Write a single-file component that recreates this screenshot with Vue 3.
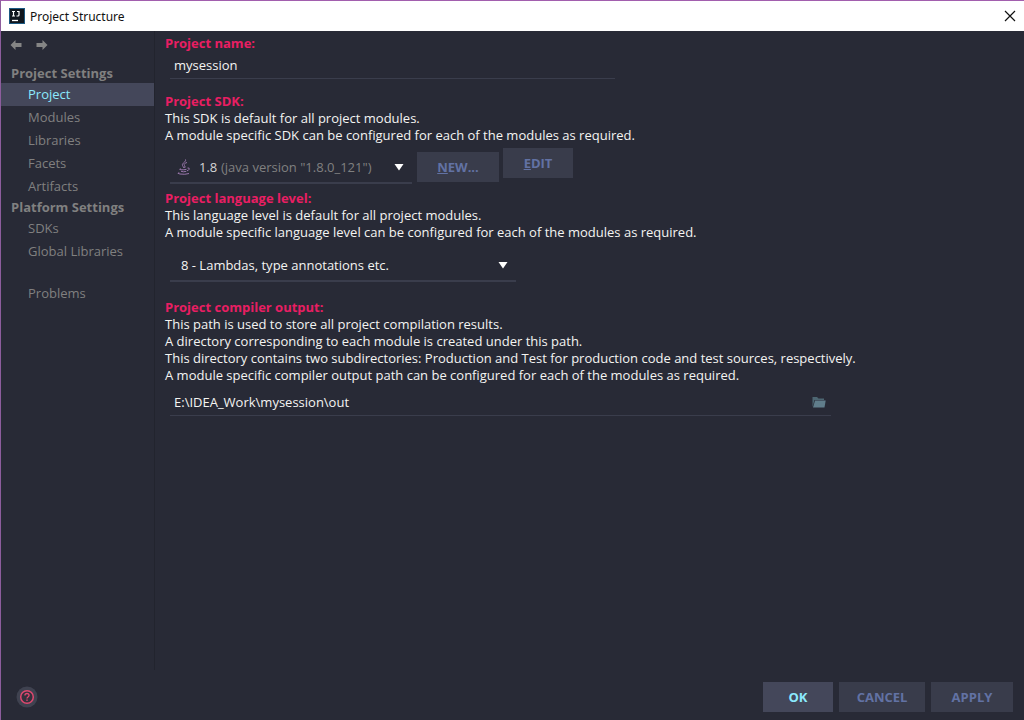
<script setup>
import { ref } from 'vue'

const projectItems = ['Project', 'Modules', 'Libraries', 'Facets', 'Artifacts']
const platformItems = ['SDKs', 'Global Libraries']
const active = ref('Project')
const name = ref('mysession')
const output = ref('E:\\IDEA_Work\\mysession\\out')
</script>

<template>
  <div class="window">
    <header class="titlebar">
      <svg class="logo" viewBox="0 0 16 16" aria-hidden="true">
        <rect width="16" height="16" fill="#1c5a83" />
        <rect x="1" y="1" width="14" height="14" fill="#10161e" />
        <path d="M3 3.500h3M4.500 3.500v4.500M3 8h3M8 3.500h2.500M10 3v4q0 1-1 1H7.500" fill="none" stroke="#fff" stroke-width="1.200" />
        <path d="M3 12.500h6" stroke="#fff" stroke-width="1.300" />
      </svg>
      <h1>Project Structure</h1>
      <button class="close" aria-label="Close">
        <svg viewBox="0 0 12 12"><path d="M1 1l10 10M11 1L1 11" stroke="#111" stroke-width="1.200" /></svg>
      </button>
    </header>

    <div class="body">
      <nav class="sidebar">
        <div class="history">
          <button aria-label="Back">
            <svg viewBox="0 0 12 10"><path d="M0.500 5L5.500 0v3H11.500v4H5.500v3z" /></svg>
          </button>
          <button aria-label="Forward">
            <svg viewBox="0 0 12 10"><path d="M11.500 5L6.500 0v3H0.500v4H6.500v3z" /></svg>
          </button>
        </div>
        <h2>Project Settings</h2>
        <a v-for="i in projectItems" :key="i" href="#" :class="{ active: active === i }" @click.prevent="active = i">{{ i }}</a>
        <h2>Platform Settings</h2>
        <a v-for="i in platformItems" :key="i" href="#" :class="{ active: active === i }" @click.prevent="active = i">{{ i }}</a>
        <a class="problems" href="#" :class="{ active: active === 'Problems' }" @click.prevent="active = 'Problems'">Problems</a>
      </nav>

      <main>
        <section>
          <label class="heading" for="name">Project name:</label>
          <input id="name" v-model="name" class="name" type="text" />
        </section>

        <section class="sdk">
          <label class="heading" for="sdk">Project SDK:</label>
          <p>This SDK is default for all project modules.</p>
          <p>A module specific SDK can be configured for each of the modules as required.</p>
          <div class="sdk-row">
            <div class="combo sdk-combo">
              <span class="prefix">
                <svg class="java" viewBox="0 0 14 16" aria-hidden="true">
                  <path d="M8.500 0.500C9.500 3 4.500 4 5.500 6.500Q6 7.500 7 9M10 3.500C7 4.500 6.500 5.500 7.800 7Q8.500 8 7.500 9M3.500 9.500Q1.500 10.500 4 10.800Q7 11 9.500 10.300M10.500 9Q13 8.500 12 10.500Q11.500 11.500 10 11.800M4 12.300Q6.500 13.300 9.300 12.300M2 13.300Q-0.500 14.500 3 15Q8 15.800 12 14.500" />
                </svg>
                <span>1.8</span>
              </span>
              <select id="sdk"><option>(java version "1.8.0_121")</option></select>
              <svg class="arrow" viewBox="0 0 10 8" aria-hidden="true"><path d="M0.500 1h9L5 7.500z" /></svg>
            </div>
            <button class="btn new"><u>N</u>EW...</button>
            <button class="btn edit"><u>E</u>DIT</button>
          </div>
        </section>

        <section class="level">
          <label class="heading" for="level">Project language level:</label>
          <p>This language level is default for all project modules.</p>
          <p>A module specific language level can be configured for each of the modules as required.</p>
          <div class="combo level-combo">
            <select id="level"><option>8 - Lambdas, type annotations etc.</option></select>
            <svg class="arrow" viewBox="0 0 10 8" aria-hidden="true"><path d="M0.500 1h9L5 7.500z" /></svg>
          </div>
        </section>

        <section class="output">
          <label class="heading" for="output">Project compiler output:</label>
          <p>This path is used to store all project compilation results.</p>
          <p>A directory corresponding to each module is created under this path.</p>
          <p>This directory contains two subdirectories: Production and Test for production code and test sources, respectively.</p>
          <p>A module specific compiler output path can be configured for each of the modules as required.</p>
          <div class="path">
            <input id="output" v-model="output" type="text" />
            <button aria-label="Browse">
              <svg viewBox="0 0 14 12">
                <path d="M0.500 11V1H5l1.500 1.500H12V4H2.500z" fill="#4d6672" />
                <path d="M3 4.500h10.700L12.500 11.500H1z" fill="#607d8b" />
              </svg>
            </button>
          </div>
        </section>
      </main>
    </div>

    <footer>
      <button class="help" aria-label="Help">
        <svg viewBox="0 0 22 22">
          <circle cx="11" cy="11" r="10.500" fill="#3f4250" />
          <circle cx="11" cy="11" r="6.300" fill="#34313d" stroke="#e0486f" stroke-width="1.500" />
          <path d="M8.900 9.500Q9 7.500 11 7.500T13.100 9.400Q13 10.300 12 11T11 12.600" fill="none" stroke="#e0486f" stroke-width="1.300" />
          <rect x="10.300" y="13.500" width="1.400" height="1.400" fill="#e0486f" />
        </svg>
      </button>
      <button class="btn ok">OK</button>
      <button class="btn cancel">CANCEL</button>
      <button class="btn apply">APPLY</button>
    </footer>
  </div>
</template>

<style>
body {
  background: #282a36;
}
</style>

<style scoped>
* {
  box-sizing: border-box;
}
.window {
  display: flex;
  flex-direction: column;
  min-height: 100vh;
  border-top: 1px solid #a25fae;
  border-left: 1px solid #8d5d9d;
  background: #282a36;
  color: #f4f4f2;
  font: 13px/17px "Open Sans", "Noto Sans", sans-serif;
}
h1, h2, p {
  margin: 0;
}
button, input, select {
  font: inherit;
  color: inherit;
  background: none;
  border: 0;
  padding: 0;
  margin: 0;
  border-radius: 0;
}
svg {
  display: block;
}
.titlebar {
  display: flex;
  align-items: center;
  height: 30px;
  padding: 0 8px;
  background: #fff;
  color: #111;
}
.logo {
  width: 16px;
  height: 16px;
}
h1 {
  flex: 1;
  margin-left: 5px;
  font-family: "Noto Sans", sans-serif;
  font-size: 12px;
  font-weight: 400;
}
.close svg {
  width: 12px;
  height: 12px;
}
.body {
  flex: 1;
  display: flex;
}
.sidebar {
  width: 154px;
  flex: none;
  border-right: 1px solid #22242e;
  color: #808080;
}
.history {
  display: flex;
  align-items: center;
  gap: 14px;
  height: 28px;
  padding-left: 9px;
  margin-bottom: 5px;
}
.history svg {
  width: 12px;
  height: 10px;
  fill: #858585;
}
h2 {
  padding-left: 10px;
  font-size: 13px;
  line-height: 19px;
}
.sidebar a {
  display: block;
  padding-left: 27px;
  line-height: 23px;
  color: inherit;
  text-decoration: none;
}
.sidebar a.active {
  background: #44475a;
  color: #8be9fd;
}
.sidebar .problems {
  margin-top: 19px;
}
main {
  flex: 1;
  padding: 4px 10px;
}
.heading {
  display: block;
  width: fit-content;
  color: #e91e63;
  font-weight: 700;
}
.name {
  display: block;
  width: 445px;
  height: 27px;
  margin-left: 5px;
  padding-left: 4px;
  border-bottom: 1px solid #3a3d4c;
}
.sdk {
  margin-top: 14px;
}
.sdk-row {
  display: flex;
  align-items: flex-start;
  margin: 4px 0 6px 5px;
}
.combo {
  display: grid;
  align-items: center;
  border-bottom: 2px solid #3a3d4c;
}
.combo > * {
  grid-area: 1 / 1;
}
.combo select {
  width: 100%;
  height: 30px;
  padding-left: 11px;
  appearance: none;
}
.arrow {
  width: 10px;
  height: 8px;
  margin-right: 8px;
  justify-self: end;
  fill: #fff;
  pointer-events: none;
}
.sdk-combo {
  width: 242px;
  margin-top: 4px;
}
.sdk-combo select {
  padding-left: 51px;
  color: #808080;
}
.prefix {
  display: flex;
  align-items: center;
  gap: 8px;
  padding-left: 7px;
  color: #d5d5d5;
  pointer-events: none;
}
.java {
  width: 14px;
  height: 16px;
  fill: none;
  stroke: #9876aa;
}
.btn {
  height: 30px;
  background: #393c4b;
  color: #6272a4;
  font-weight: 700;
}
.new {
  width: 82px;
  margin: 4px 4px 0 5px;
}
.edit {
  width: 70px;
}
.level-combo {
  width: 346px;
  margin: 9px 0 0 5px;
}
.output {
  margin-top: 17px;
}
.path {
  display: flex;
  align-items: center;
  width: 661px;
  height: 32px;
  margin-left: 5px;
  padding: 5px 5px 0 4px;
  border-bottom: 1px solid #3a3d4c;
}
.path input {
  flex: 1;
}
.path svg {
  width: 14px;
  height: 12px;
}
footer {
  display: flex;
  align-items: center;
  gap: 6px;
  height: 50px;
  padding: 4px 11px 0 15px;
}
.help {
  margin-right: auto;
}
.help svg {
  width: 22px;
  height: 22px;
}
.ok {
  width: 70px;
  background: #44475a;
  color: #8be9fd;
}
.cancel {
  width: 86px;
}
.apply {
  width: 82px;
}
</style>
